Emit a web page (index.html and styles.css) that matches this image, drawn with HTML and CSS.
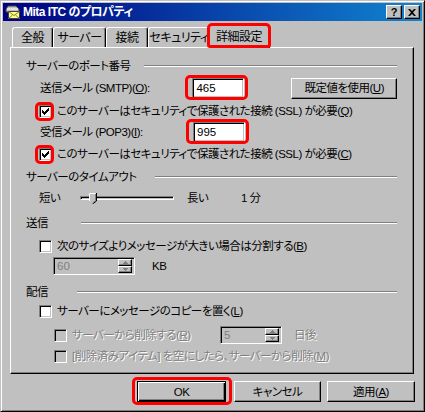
FILE: index.html
```html
<!DOCTYPE html>
<html lang="ja">
<head>
<meta charset="utf-8">
<title>Mita ITC のプロパティ</title>
<link rel="stylesheet" href="styles.css">
</head>
<body>
<div class="window">
  <div class="titlebar">
    <svg class="app-icon" width="16" height="16" viewBox="0 0 16 16">
      <path d="M3 2h8l3 3v3H1V5z" fill="#c0c0c0" stroke="#404040" stroke-width="1"/>
      <path d="M2 5h11" stroke="#fff"/>
      <rect x="3.5" y="7.5" width="11" height="7" fill="#ffff80" stroke="#404040"/>
      <path d="M3.5 7.5l5.5 4 5.5-4M3.5 14.5l4-3.5M14.5 14.5l-4-3.5" fill="none" stroke="#808040"/>
    </svg>
    <span class="title-text">Mita ITC のプロパティ</span>
    <span class="cap-btns">
      <span class="cap-btn">?</span>
      <span class="cap-btn"><svg width="8" height="7" viewBox="0 0 8 7"><path d="M0 0h2l2 2 2-2h2L5 3.5 8 7H6L4 5 2 7H0l3-3.5z" fill="#000"/></svg></span>
    </span>
  </div>

  <div class="client">
    <div class="tabs">
      <span class="tab tab-general">全般</span>
      <span class="tab tab-server">サーバー</span>
      <span class="tab tab-conn">接続</span>
      <span class="tab tab-security">セキュリティ</span>
      <span class="tab tab-adv tab-active mark mark-tab">詳細設定</span>
    </div>

    <div class="panel">
      <div class="group group-port">
        <span class="g-label">サーバーのポート番号</span><span class="etch"></span>
      </div>
      <div class="row row-smtp">
        <span class="lbl-port">送信メール (SMTP)(<u>O</u>):</span>
        <span class="mark mark-input"><span class="input">465</span></span>
        <span class="btn btn-defaults">既定値を使用(<u>U</u>)</span>
      </div>
      <div class="row row-chk1">
        <span class="mark mark-check"><span class="check checked"><svg width="13" height="13" viewBox="0 0 13 13"><path d="M3 5h1v3H3zM4 6h1v3H4zM5 7h1v3H5zM6 6h1v3H6zM7 5h1v3H7zM8 4h1v3H8zM9 3h1v3H9z" fill="#000"/></svg></span></span>
        <span class="chk-text">このサーバーはセキュリティで保護された接続 (SSL) が必要(<u>Q</u>)</span>
      </div>
      <div class="row row-pop">
        <span class="lbl-port">受信メール (POP3)(<u>I</u>):</span>
        <span class="mark mark-input"><span class="input">995</span></span>
      </div>
      <div class="row row-chk2">
        <span class="mark mark-check"><span class="check checked"><svg width="13" height="13" viewBox="0 0 13 13"><path d="M3 5h1v3H3zM4 6h1v3H4zM5 7h1v3H5zM6 6h1v3H6zM7 5h1v3H7zM8 4h1v3H8zM9 3h1v3H9z" fill="#000"/></svg></span></span>
        <span class="chk-text">このサーバーはセキュリティで保護された接続 (SSL) が必要(<u>C</u>)</span>
      </div>

      <div class="group group-timeout">
        <span class="g-label">サーバーのタイムアウト</span><span class="etch"></span>
      </div>
      <div class="row row-slider">
        <span class="lbl-short">短い</span>
        <span class="track"><span class="thumb"><svg width="8" height="11" viewBox="0 0 8 11"><path d="M0 0h7v8l-3.5 3L0 8z" fill="#c0c0c0"/><path d="M0.5 8V0.5h6" fill="none" stroke="#fff"/><path d="M7.5 0v8l-4 3" fill="none" stroke="#000"/><path d="M6.5 1v6.5l-3 2.6" fill="none" stroke="#808080"/></svg></span></span>
        <span class="lbl-long">長い</span>
        <span class="lbl-value">1 分</span>
      </div>

      <div class="group group-send">
        <span class="g-label">送信</span><span class="etch"></span>
      </div>
      <div class="row row-chk3">
        <span class="check"></span>
        <span class="chk-text">次のサイズよりメッセージが大きい場合は分割する(<u>B</u>)</span>
      </div>
      <div class="row row-spin">
        <span class="spin spin-size"><span class="spin-val">60</span><span class="spin-btns"><span class="spin-btn"><svg width="5" height="3" viewBox="0 0 5 3"><path d="M2 0h1v1h1v1h1v1H0V2h1V1h1z" fill="#808080"/></svg></span><span class="spin-btn"><svg width="5" height="3" viewBox="0 0 5 3"><path d="M0 0h5v1H4v1H3v1H2V2H1V1H0z" fill="#808080"/></svg></span></span></span>
        <span class="lbl-kb">KB</span>
      </div>

      <div class="group group-deliver">
        <span class="g-label">配信</span><span class="etch"></span>
      </div>
      <div class="row row-chk4">
        <span class="check"></span>
        <span class="chk-text">サーバーにメッセージのコピーを置く(<u>L</u>)</span>
      </div>
      <div class="row row-chk5">
        <span class="check check-disabled"></span>
        <span class="chk-text disabled lbl-delete">サーバーから削除する(<u>R</u>)</span>
        <span class="spin spin-days"><span class="spin-val">5</span><span class="spin-btns"><span class="spin-btn"><svg width="5" height="3" viewBox="0 0 5 3"><path d="M2 0h1v1h1v1h1v1H0V2h1V1h1z" fill="#808080"/></svg></span><span class="spin-btn"><svg width="5" height="3" viewBox="0 0 5 3"><path d="M0 0h5v1H4v1H3v1H2V2H1V1H0z" fill="#808080"/></svg></span></span></span>
        <span class="disabled lbl-days">日後</span>
      </div>
      <div class="row row-chk6">
        <span class="check check-disabled"></span>
        <span class="chk-text disabled">[削除済みアイテム] を空にしたら、サーバーから削除(<u>M</u>)</span>
      </div>
    </div>

    <div class="buttons">
      <span class="mark mark-ok"><span class="btn btn-dlg btn-ok">OK</span></span>
      <span class="btn btn-dlg btn-cancel">キャンセル</span>
      <span class="btn btn-dlg btn-apply">適用(<u>A</u>)</span>
    </div>
  </div>
</div>
</body>
</html>
```

FILE: styles.css
```css
* { box-sizing: border-box; }

html, body {
  margin: 0;
  padding: 0;
}

body {
  width: 425px;
  height: 412px;
  overflow: hidden;
  background: #c0c0c0;
  font-family: "Liberation Sans", "Noto Sans CJK JP", sans-serif;
  font-size: 11.5px;
  line-height: 14px;
  letter-spacing: -0.5px;
  color: #000;
  font-feature-settings: "palt";
}

u { text-decoration: underline; text-underline-offset: 1px; }

/* ---------- window frame ---------- */
.window {
  width: 425px;
  height: 412px;
  background: #c0c0c0;
  border: 1px solid;
  border-color: #c0c0c0 #000 #000 #c0c0c0;
  box-shadow: inset 1px 1px #fff, inset -1px -1px #808080;
  padding: 2px;
  display: flex;
  flex-direction: column;
}

.titlebar {
  height: 18px;
  display: flex;
  align-items: center;
  padding: 0 2px;
  background: linear-gradient(to right, #000080, #1084d0);
  color: #fff;
  font-size: 12px;
  font-weight: bold;
}

.app-icon { flex: none; margin-right: 2px; }

.title-text { flex: 1; white-space: nowrap; letter-spacing: -0.5px; }

.cap-btns { display: flex; gap: 2px; }

.cap-btn {
  width: 16px;
  height: 14px;
  display: flex;
  align-items: center;
  justify-content: center;
  background: #c0c0c0;
  color: #000;
  border: 1px solid;
  border-color: #fff #000 #000 #fff;
  box-shadow: inset -1px -1px #808080;
  font-size: 11px;
  font-weight: bold;
  letter-spacing: 0;
  line-height: 1;
}

/* ---------- client area ---------- */
.client {
  flex: 1;
  padding: 4px 8px 0 7px;
  display: flex;
  flex-direction: column;
}

.tabs {
  height: 22px;
  display: flex;
  align-items: flex-end;
  padding-left: 2px;
  position: relative;
  z-index: 1;
  font-size: 12px;
}

.tab {
  flex: none;
  height: 20px;
  display: flex;
  align-items: center;
  justify-content: center;
  border: 1px solid;
  border-bottom: none;
  border-color: #fff #000 transparent #fff;
  border-radius: 3px 3px 0 0;
  box-shadow: inset -1px 0 #808080;
  background: #c0c0c0;
  white-space: nowrap;
}

.tab-general { width: 41px; }
.tab-server { width: 53px; }
.tab-conn { width: 42px; }
.tab-security { width: 62px; }
.tab-adv { width: 62px; }

.tab-active {
  height: 23px;
  margin: 0 -2px -1px -2px;
  padding-bottom: 1px;
  position: relative;
  z-index: 2;
}

.panel {
  height: 327px;
  border: 1px solid;
  border-color: #fff #000 #000 #fff;
  box-shadow: inset -1px -1px #808080;
  padding: 10px 16px 0 15px;
  display: flex;
  flex-direction: column;
}

/* ---------- groups ---------- */
.group {
  height: 16px;
  display: flex;
  align-items: center;
  white-space: nowrap;
}

.g-label { flex: none; }

.group-port .g-label { width: 118px; }
.group-timeout .g-label { width: 129px; }
.group-send .g-label { width: 55px; }
.group-deliver .g-label { width: 51px; }

.etch {
  flex: 1;
  height: 2px;
  margin-top: -1px;
  border-top: 1px solid #808080;
  border-bottom: 1px solid #fff;
}

.group-timeout { margin-top: 6px; }
.group-send { margin-top: 7px; }
.group-deliver { margin-top: 9px; }

/* ---------- rows ---------- */
.row {
  display: flex;
  align-items: center;
  padding-left: 13px;
  white-space: nowrap;
}

.row-smtp { height: 22px; margin-top: 3px; }
.row-chk1 { height: 18px; margin-top: 3px; }
.row-pop { height: 22px; margin-top: 1px; }
.row-chk2 { height: 18px; margin-top: 2px; }
.row-slider { height: 20px; margin-top: 3px; }
.row-chk3 { height: 18px; margin-top: 6px; }
.row-spin { height: 18px; margin-top: 2px; padding-left: 27px; }
.row-chk4 { height: 18px; margin-top: 2px; }
.row-chk5 { height: 20px; margin-top: 5px; padding-left: 28px; }
.row-chk6 { height: 18px; margin-top: 2px; padding-left: 28px; }

.lbl-port { width: 154px; padding-left: 1px; }

.input {
  display: flex;
  align-items: center;
  width: 52px;
  height: 20px;
  padding: 0 3px;
  background: #fff;
  border: 1px solid;
  border-color: #808080 #fff #fff #808080;
  box-shadow: inset 1px 1px #000, inset -1px -1px #c0c0c0;
  letter-spacing: 0;
}

.btn {
  display: flex;
  align-items: center;
  justify-content: center;
  background: #c0c0c0;
  border: 1px solid;
  border-color: #fff #000 #000 #fff;
  box-shadow: inset -1px -1px #808080;
  white-space: nowrap;
}

.btn-defaults {
  width: 106px;
  height: 21px;
  margin-left: 47px;
}

.check {
  flex: none;
  width: 13px;
  height: 13px;
  display: block;
  background: #fff;
  border: 1px solid;
  border-color: #808080 #fff #fff #808080;
  box-shadow: inset 1px 1px #000, inset -1px -1px #c0c0c0;
}

.check svg { display: block; margin: -1px 0 0 -1px; }

.check-disabled { background: #c0c0c0; }

.chk-text { margin-left: 5px; }

.disabled {
  color: #808080;
  text-shadow: 1px 1px 0 #fff;
}

/* ---------- slider ---------- */
.lbl-short { width: 41px; }

.track {
  width: 94px;
  height: 4px;
  position: relative;
  border: 1px solid;
  border-color: #808080 #fff #fff #808080;
  box-shadow: inset 1px 1px #000, inset -1px -1px #c0c0c0;
}

.thumb {
  position: absolute;
  left: 8px;
  top: -4px;
  width: 8px;
  height: 11px;
}

.thumb svg { display: block; }

.lbl-long { margin-left: 13px; width: 54px; }

/* ---------- spin boxes ---------- */
.spin {
  display: flex;
  align-items: center;
  height: 18px;
  padding: 2px;
  border: 1px solid;
  border-color: #808080 #fff #fff #808080;
  box-shadow: inset 1px 1px #000, inset -1px -1px #c0c0c0;
  background: #c0c0c0;
  color: #808080;
  letter-spacing: 0;
}

.spin-size { width: 82px; }
.spin-days { width: 62px; }

.spin-val { flex: 1; padding-left: 1px; }

.spin-btns {
  width: 14px;
  height: 14px;
  display: flex;
  flex-direction: column;
}

.spin-btn {
  flex: 1;
  display: flex;
  align-items: center;
  justify-content: center;
  border: 1px solid;
  border-color: #fff #000 #000 #fff;
  box-shadow: inset -1px -1px #808080;
}

.spin-btn svg { display: block; }

.lbl-kb { margin-left: 17px; }

.lbl-delete { width: 148px; }

.lbl-days { margin-left: 12px; }

/* ---------- dialog buttons ---------- */
.buttons {
  display: flex;
  justify-content: flex-end;
  margin-top: 7px;
  margin-right: -1px;
}

.btn-dlg { height: 21px; }

.btn-ok {
  width: 89px;
  border-color: #000;
  box-shadow: inset 1px 1px #fff, inset -1px -1px #000, inset -2px -2px #808080;
}

.btn-cancel { width: 87px; margin-left: 8px; }
.btn-apply { width: 88px; margin-left: 6px; }

/* ---------- red annotation boxes ---------- */
.mark { position: relative; flex: none; }

.mark-input, .mark-check, .mark-ok { display: block; }

.mark::after {
  content: "";
  position: absolute;
  border: 3px solid #f00;
  border-radius: 5px;
  pointer-events: none;
}

.mark-input::after { top: -3px; bottom: -2px; left: -7px; right: -4px; }
.mark-check::after { top: -3px; bottom: -3px; left: -4px; right: -2px; }
.mark-ok::after { top: -4px; bottom: -3px; left: -5px; right: -6px; }
.mark-tab::after { top: -3px; bottom: 0; left: -2px; right: -2px; border-radius: 5px 5px 3px 3px; }
```
